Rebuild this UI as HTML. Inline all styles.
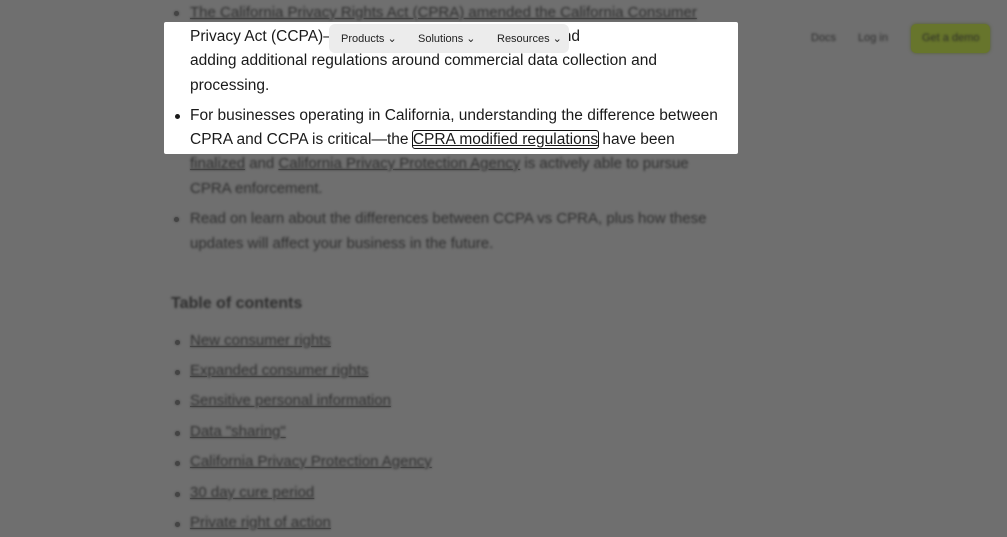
<!DOCTYPE html>
<html><head><meta charset="utf-8"><style>
html,body{margin:0;padding:0;width:1007px;height:537px;overflow:hidden;background:#6f6f6f;font-family:"Liberation Sans",sans-serif;}
.bg{position:absolute;left:0;top:0;width:1007px;height:537px;color:transparent;text-shadow:0 0 2px rgba(40,40,40,0.9);}
.t{position:absolute;font-size:15px;white-space:nowrap;}
.u{text-decoration:underline;text-decoration-color:rgba(50,50,50,0.6);}
.dot{position:absolute;width:5px;height:5px;border-radius:50%;background:#444;box-shadow:0 0 2px #444;}
.box{position:absolute;left:164px;top:22px;width:574px;height:132px;background:#fff;border-radius:2px;}
.w{position:absolute;font-size:15.5px;color:#1a1a1a;white-space:nowrap;left:190px;}
.nav{position:absolute;left:329px;top:24px;width:240px;height:29px;background:#ececec;border-radius:6px;font-size:11px;color:#222;}
.nav span{position:absolute;top:8px;}
</style></head><body>
<div class="bg">
<div class="dot" style="left:174px;top:11px"></div>
<div class="t u" style="left:190px;top:4px">The California Privacy Rights Act (CPRA) <span style="text-decoration:none">amended the California Consumer</span></div>
<div class="t" style="left:190px;top:155px"><span class="u">finalized</span> and <span class="u">California Privacy Protection Agency</span> is actively able to pursue</div>
<div class="t" style="left:190px;top:180px">CPRA enforcement.</div>
<div class="dot" style="left:174px;top:217px"></div>
<div class="t" style="left:190px;top:210px">Read on learn about the differences between CCPA vs CPRA, plus how these</div>
<div class="t" style="left:190px;top:235px">updates will affect your business in the future.</div>
<div class="t" style="left:171px;top:295px;font-weight:bold;font-size:16px">Table of contents</div>
<div class="dot" style="left:175px;top:340px"></div><div class="t u" style="left:190px;top:332px">New consumer rights</div>
<div class="dot" style="left:175px;top:370px"></div><div class="t u" style="left:190px;top:362px">Expanded consumer rights</div>
<div class="dot" style="left:175px;top:400px"></div><div class="t u" style="left:190px;top:392px">Sensitive personal information</div>
<div class="dot" style="left:175px;top:431px"></div><div class="t u" style="left:190px;top:423px">Data "sharing"</div>
<div class="dot" style="left:175px;top:461px"></div><div class="t u" style="left:190px;top:453px">California Privacy Protection Agency</div>
<div class="dot" style="left:175px;top:492px"></div><div class="t u" style="left:190px;top:484px">30 day cure period</div>
<div class="dot" style="left:175px;top:522px"></div><div class="t u" style="left:190px;top:514px">Private right of action</div>
<div class="t" style="left:811px;top:32px;font-size:11px">Docs</div>
<div class="t" style="left:858px;top:32px;font-size:11px">Log in</div>
<div style="position:absolute;left:911px;top:24px;width:79px;height:29px;background:#67752c;border-radius:5px;box-shadow:0 0 3px #55602a;"></div>
<div class="t" style="left:922px;top:32px;font-size:11px">Get a demo</div>
</div>
<div class="box"></div>
<div class="w" style="top:28px">Privacy Act (CCPA)—by expanding consumer rights, and</div>
<div class="w" style="top:52px">adding additional regulations around commercial data collection and</div>
<div class="w" style="top:77px">processing.</div>
<div style="position:absolute;left:175px;top:114px;width:5px;height:5px;border-radius:50%;background:#1a1a1a"></div>
<div class="w" style="top:107px">For businesses operating in California, understanding the difference between</div>
<div class="w" style="top:131px">CPRA and CCPA is critical—the <span style="text-decoration:underline;outline:1.5px solid #111;border-radius:2px">CPRA modified regulations</span> have been</div>
<div class="nav">
<span style="left:12px">Products ⌄</span>
<span style="left:89px">Solutions ⌄</span>
<span style="left:168px">Resources ⌄</span>
</div>
</body></html>
